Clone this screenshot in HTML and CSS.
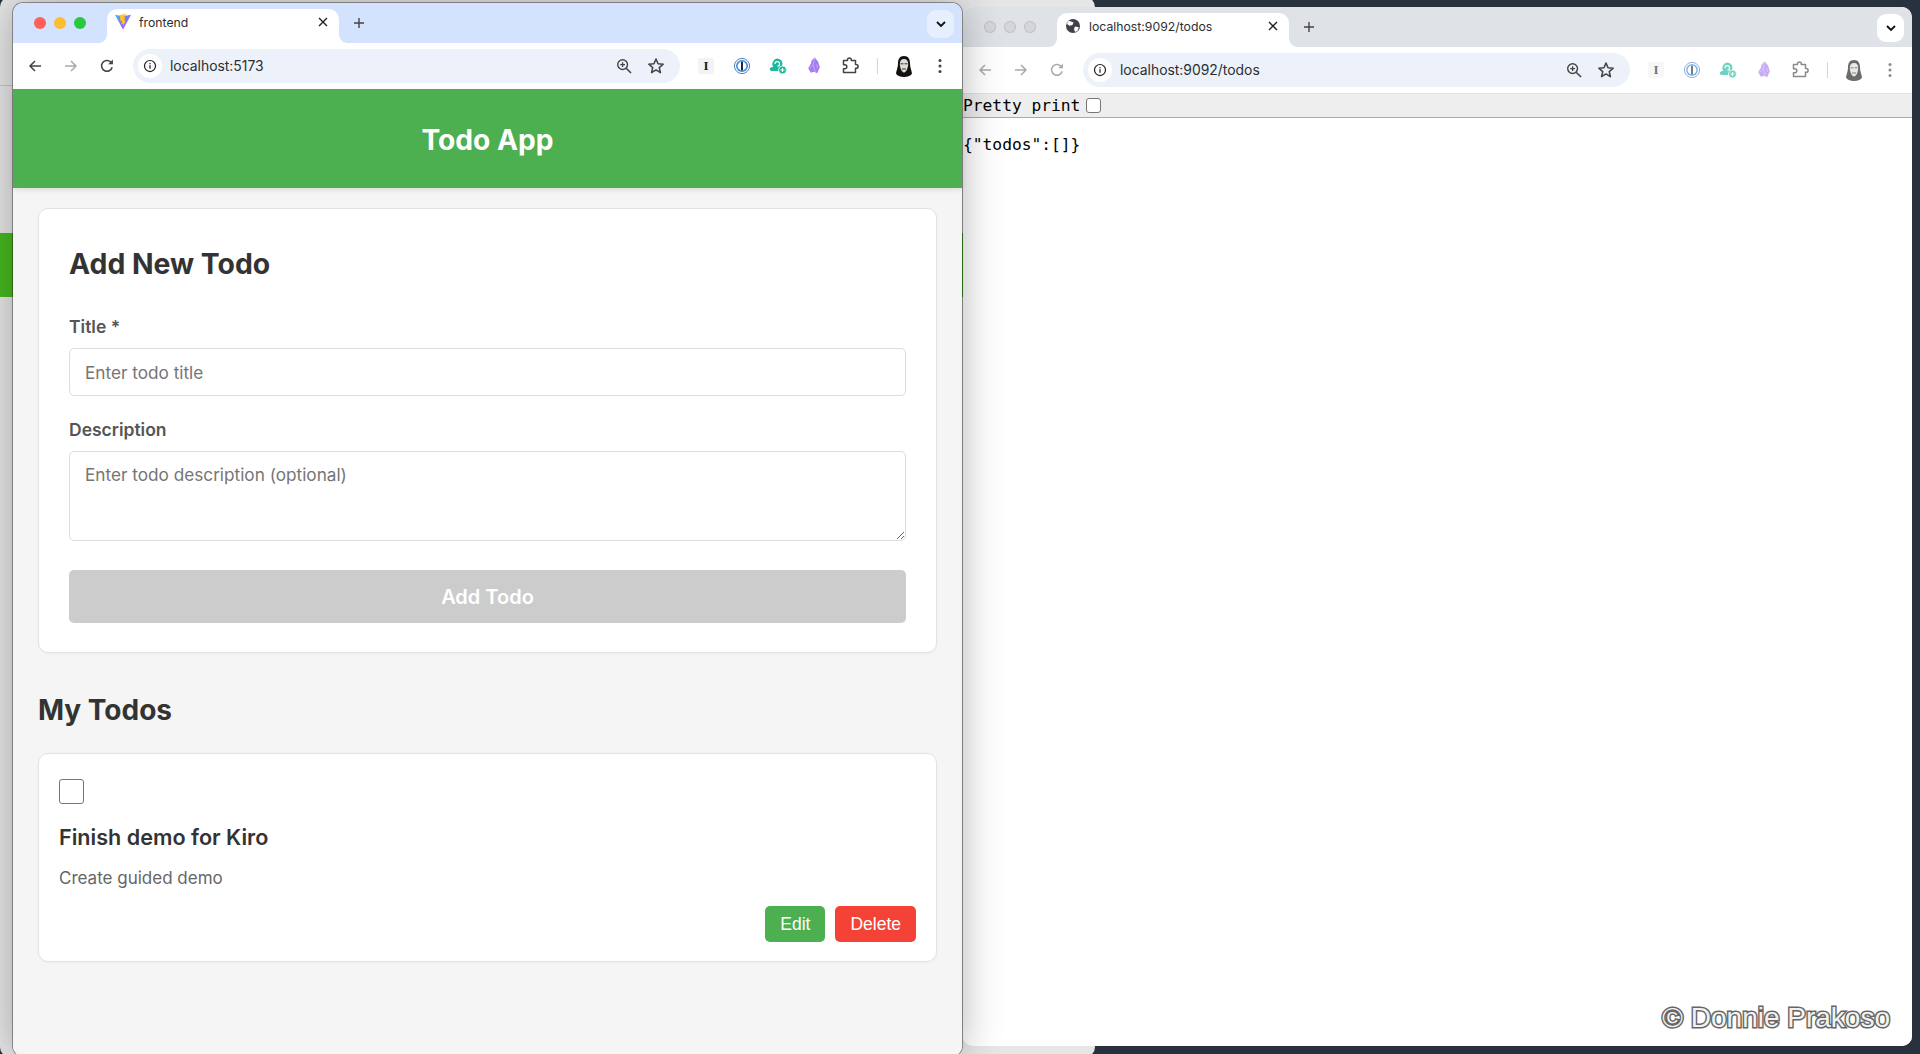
FILE: index.html
```html
<!DOCTYPE html>
<html lang="en">
<head>
<meta charset="utf-8">
<title>frontend</title>
<link rel="stylesheet" href="styles.css">
</head>
<body>
<svg class="defs" width="0" height="0" aria-hidden="true">
  <symbol id="i-back" viewBox="0 0 16 16"><path d="M14 8H3M8 3 3 8l5 5" fill="none" stroke="currentColor" stroke-width="1.5"/></symbol>
  <symbol id="i-fwd" viewBox="0 0 16 16"><path d="M2 8h11M8 3l5 5-5 5" fill="none" stroke="currentColor" stroke-width="1.5"/></symbol>
  <symbol id="i-reload" viewBox="0 0 16 16"><path d="M13.2 9.2A5.4 5.4 0 1 1 11.8 4L13.4 5.6" fill="none" stroke="currentColor" stroke-width="1.5"/><path d="M13.9 1.6v4.7H9.2z" fill="currentColor"/></symbol>
  <symbol id="i-info" viewBox="0 0 16 16"><circle cx="8" cy="8" r="6.3" fill="none" stroke="currentColor" stroke-width="1.4"/><rect x="7.3" y="7" width="1.4" height="4.2" fill="currentColor"/><rect x="7.3" y="4.6" width="1.4" height="1.4" fill="currentColor"/></symbol>
  <symbol id="i-zoom" viewBox="0 0 16 16"><circle cx="6.6" cy="6.6" r="4.9" fill="none" stroke="currentColor" stroke-width="1.4"/><path d="M10.2 10.2 15 15" stroke="currentColor" stroke-width="1.6"/><path d="M4.2 6.6h4.8M6.6 4.2v4.8" stroke="currentColor" stroke-width="1.3"/></symbol>
  <symbol id="i-star" viewBox="0 0 16 16"><path d="M8 1.8 9.8 6l4.6.4-3.5 3 1 4.5L8 11.5 4.100 13.900l1-4.500-3.500-3L6.200 6z" fill="none" stroke="currentColor" stroke-width="1.4" stroke-linejoin="round"/></symbol>
  <symbol id="i-close" viewBox="0 0 10 10"><path d="M1 1l8 8M9 1 1 9" stroke="currentColor" stroke-width="1.4"/></symbol>
  <symbol id="i-plus" viewBox="0 0 12 12"><path d="M6 1v10M1 6h10" stroke="currentColor" stroke-width="1.4"/></symbol>
  <symbol id="i-chev" viewBox="0 0 12 12"><path d="M2 4l4 4 4-4" fill="none" stroke="currentColor" stroke-width="1.8"/></symbol>
  <symbol id="i-menu" viewBox="0 0 4 16"><circle cx="2" cy="2.500" r="1.500" fill="currentColor"/><circle cx="2" cy="8" r="1.500" fill="currentColor"/><circle cx="2" cy="13.500" r="1.500" fill="currentColor"/></symbol>
  <symbol id="i-puzzle" viewBox="0 0 18 18"><path d="M2.500 3.500H6.500V2.800A1.900 1.900 0 0 1 10.300 2.800V3.500H14.500V7.500H15.200A1.900 1.900 0 0 1 15.200 11.300H14.500V15.500H2.500V11.700H3.800A2 2 0 0 0 3.800 7.700H2.500Z" fill="none" stroke="currentColor" stroke-width="1.500" stroke-linejoin="round"/></symbol>
  <symbol id="i-1p" viewBox="0 0 18 18"><circle cx="9" cy="9" r="7.600" fill="#fff" stroke="#5b7fb5" stroke-width="1"/><circle cx="9" cy="9" r="6" fill="#3d8fe0"/><circle cx="9" cy="9" r="4.400" fill="#fff"/><rect x="8" y="4.500" width="2" height="9" rx=".6" fill="#1d2b3f"/></symbol>
  <symbol id="i-teal" viewBox="0 0 18 18"><path d="M8 1.500a5.500 5.500 0 0 1 5.500 5.500l-.5 2.500-2.500 1.500-1.500 3H2.500A1.800 1.800 0 0 1 2 10.500L4.200 9.800A5.500 5.500 0 0 1 8 1.500Z" fill="#19b79b"/><path d="M6 7a2.300 2.300 0 1 1 2.500 2.200" fill="none" stroke="#fff" stroke-width="1.200"/><circle cx="13.500" cy="13" r="4" fill="#19b79b" stroke="#fff" stroke-width=".8"/><path d="M13.500 11v4M11.500 13h4" stroke="#fff" stroke-width="1.200"/></symbol>
  <symbol id="i-crystal" viewBox="0 0 18 20"><path d="M9.800.5 13.500 5 15.500 11.500 12.500 18 9 16.500 5.500 17.500 2.500 12.500 5.500 7.500 6.500 3.500Z" fill="#a67cf0"/><path d="M9.800.5 8 8.500 10.500 16.500M8 8.500 3.500 13M12 8 13 12" fill="none" stroke="#c9b0f8" stroke-width=".9"/></symbol>
  <symbol id="i-avatar" viewBox="0 0 18 22"><path d="M9 .5C4.500.5 3 4 3 8c0 4-1.500 6.500-2 10 1 2 4 3.500 8 3.500s7-1.500 8-3.500c-.5-3.500-2-6-2-10C15 4 13.500.5 9 .5Z" fill="#111"/><path d="M9 3.500C6 3.500 4.800 5.500 4.800 8.500S6.500 17 9 17s4.200-5.500 4.200-8.500S12 3.500 9 3.500Z" fill="#e2dcd6"/><path d="M5.500 8.300h3M9.500 8.300h3M7 13.500h4" stroke="#222" stroke-width=".9"/></symbol>
  <symbol id="i-globe" viewBox="0 0 16 16"><circle cx="8" cy="8" r="7" fill="#3f4347"/><path d="M4 2.800 8.500 4.500 7.500 7 4.500 7.800 2 6 2.500 4ZM10 8.500l3.800.8-1.300 3.500-2.500 1.200-1-3Z" fill="#fff"/></symbol>
  <linearGradient id="vite-a" x1="0" y1="0" x2="1" y2="1"><stop offset="0" stop-color="#41b4ff"/><stop offset="1" stop-color="#bd34fe"/></linearGradient>
  <symbol id="i-vite" viewBox="0 0 16 16"><path d="M0 .8 8 15.500 16 .8 8 2.200Z" fill="url(#vite-a)"/><path d="M11.500 0 4.800 1 5.500 7 7 6.700 6.500 10 8 9.700 7.800 12.500 11 6.500 9.300 6.800 10.200 3.500 8.800 3.800Z" fill="#ffc41f"/></symbol>
</svg>

<div class="back-window">
  <div class="back-line"></div>
  <div class="back-green"></div>
</div>

<section class="window window-right">
  <header class="tabstrip tabstrip-idle">
    <div class="lights lights-idle"><span class="light"></span><span class="light"></span><span class="light"></span></div>
    <div class="tab">
      <svg class="tab-fav"><use href="#i-globe"/></svg>
      <span class="tab-title">localhost:9092/todos</span>
      <svg class="tab-close"><use href="#i-close"/></svg>
    </div>
    <svg class="newtab"><use href="#i-plus"/></svg>
    <div class="tabmenu tabmenu-idle"><svg class="tabmenu-icon"><use href="#i-chev"/></svg></div>
  </header>
  <nav class="toolbar">
    <span class="tool faded"><svg class="ico16"><use href="#i-back"/></svg></span>
    <span class="tool faded"><svg class="ico16"><use href="#i-fwd"/></svg></span>
    <span class="tool faded"><svg class="ico16"><use href="#i-reload"/></svg></span>
    <div class="omnibox">
      <span class="site-info"><svg class="ico14"><use href="#i-info"/></svg></span>
      <span class="url">localhost:9092/todos</span>
      <span class="omni-tool omni-first"><svg class="ico16"><use href="#i-zoom"/></svg></span>
      <span class="omni-tool"><svg class="ico18"><use href="#i-star"/></svg></span>
    </div>
    <div class="extensions ext-faded">
      <span class="tool"><span class="ext-i">I</span></span>
      <span class="tool"><svg class="ico18"><use href="#i-1p"/></svg></span>
      <span class="tool"><svg class="ico18"><use href="#i-teal"/></svg></span>
      <span class="tool"><svg class="ico18"><use href="#i-crystal"/></svg></span>
      <span class="tool"><svg class="ico18"><use href="#i-puzzle"/></svg></span>
    </div>
    <span class="divider"></span>
    <span class="tool ext-faded"><svg class="avatar"><use href="#i-avatar"/></svg></span>
    <span class="tool ext-faded"><svg class="ico-menu"><use href="#i-menu"/></svg></span>
  </nav>
  <div class="json-page">
    <div class="pretty-bar"><label class="pretty-label">Pretty print</label><input class="pretty-check" type="checkbox"></div>
    <pre class="json">{"todos":[]}</pre>
    <div class="watermark">© Donnie Prakoso</div>
  </div>
</section>

<section class="window window-left">
  <header class="tabstrip">
    <div class="lights"><span class="light red"></span><span class="light yellow"></span><span class="light green"></span></div>
    <div class="tab">
      <svg class="tab-fav"><use href="#i-vite"/></svg>
      <span class="tab-title">frontend</span>
      <svg class="tab-close"><use href="#i-close"/></svg>
    </div>
    <svg class="newtab"><use href="#i-plus"/></svg>
    <div class="tabmenu"><svg class="tabmenu-icon"><use href="#i-chev"/></svg></div>
  </header>
  <nav class="toolbar">
    <span class="tool"><svg class="ico16"><use href="#i-back"/></svg></span>
    <span class="tool faded"><svg class="ico16"><use href="#i-fwd"/></svg></span>
    <span class="tool"><svg class="ico16"><use href="#i-reload"/></svg></span>
    <div class="omnibox">
      <span class="site-info"><svg class="ico14"><use href="#i-info"/></svg></span>
      <span class="url">localhost:5173</span>
      <span class="omni-tool omni-first"><svg class="ico16"><use href="#i-zoom"/></svg></span>
      <span class="omni-tool"><svg class="ico18"><use href="#i-star"/></svg></span>
    </div>
    <div class="extensions">
      <span class="tool"><span class="ext-i">I</span></span>
      <span class="tool"><svg class="ico18"><use href="#i-1p"/></svg></span>
      <span class="tool"><svg class="ico18"><use href="#i-teal"/></svg></span>
      <span class="tool"><svg class="ico18"><use href="#i-crystal"/></svg></span>
      <span class="tool"><svg class="ico18"><use href="#i-puzzle"/></svg></span>
    </div>
    <span class="divider"></span>
    <span class="tool"><svg class="avatar"><use href="#i-avatar"/></svg></span>
    <span class="tool"><svg class="ico-menu"><use href="#i-menu"/></svg></span>
  </nav>
  <div class="app">
    <div class="app-header"><h1 class="app-title">Todo App</h1></div>
    <main class="app-main">
      <form class="card form-card">
        <h2 class="form-title">Add New Todo</h2>
        <label class="field-label">Title *</label>
        <input class="field field-input" type="text" placeholder="Enter todo title">
        <label class="field-label field-label-second">Description</label>
        <textarea class="field field-area" placeholder="Enter todo description (optional)"></textarea>
        <button class="submit" type="button">Add Todo</button>
      </form>
      <h2 class="list-title">My Todos</h2>
      <article class="card todo-card">
        <input class="todo-check" type="checkbox">
        <h3 class="todo-title">Finish demo for Kiro</h3>
        <p class="todo-desc">Create guided demo</p>
        <div class="todo-actions">
          <button class="action action-edit" type="button">Edit</button>
          <button class="action action-delete" type="button">Delete</button>
        </div>
      </article>
    </main>
  </div>
</section>
</body>
</html>
```
FILE: styles.css
```css
* { box-sizing: border-box; }
html, body { margin: 0; height: 100%; }
body {
  position: relative;
  width: 1920px;
  height: 1054px;
  overflow: hidden;
  background: #27323e;
  font-family: Inter, "Liberation Sans", sans-serif;
  color: #333;
}
.defs { position: absolute; }

.back-window {
  position: absolute;
  left: 0;
  top: -3px;
  width: 1095px;
  height: 1060px;
  border-radius: 10px;
  background: #e6e6e6;
}
.back-line { position: absolute; left: 0; top: 88px; width: 100%; height: 1px; background: #c4c4c4; }
.back-green { position: absolute; left: 0; top: 236px; width: 100%; height: 64px; background: #47b81f; }

.window {
  position: absolute;
  display: flex;
  flex-direction: column;
  overflow: hidden;
  border-radius: 10px;
  background: #fff;
}
.window-left {
  left: 13px;
  top: 3px;
  width: 949px;
  height: 1053px;
  box-shadow: 0 0 40px rgba(0, 0, 0, .3), 0 0 0 1px rgba(0, 0, 0, .35);
  overflow: visible;
}
.window-right { left: 963px; top: 7px; width: 949px; height: 1039px; }

.tabstrip {
  flex: none;
  display: flex;
  height: 40px;
  background: #d3e3fd;
  border-radius: 10px 10px 0 0;
}
.tabstrip-idle { background: #dfe3e8; }
.lights { flex: none; display: flex; gap: 8px; width: 94px; padding: 14px 0 0 21px; }
.light { width: 12px; height: 12px; border-radius: 50%; }
.lights-idle .light { background: #d4d6d9; box-shadow: inset 0 0 0 1px #bfc2c5; }
.red { background: #ff5f57; }
.yellow { background: #febc2e; }
.green { background: #28c840; }

.tab {
  position: relative;
  flex: none;
  display: flex;
  align-items: center;
  width: 232px;
  height: 34px;
  margin-top: 6px;
  padding: 0 11px 8px 8px;
  background: #fff;
  border-radius: 10px 10px 0 0;
}
.tab::before, .tab::after {
  content: "";
  position: absolute;
  bottom: 0;
  width: 8px;
  height: 8px;
}
.tab::before { left: -8px; background: radial-gradient(circle at 0 0, transparent 7.5px, #fff 8px); }
.tab::after { right: -8px; background: radial-gradient(circle at 100% 0, transparent 7.5px, #fff 8px); }
.tab-fav { width: 16px; height: 16px; flex: none; }
.tab-title { margin-left: 8px; font-size: 12.250px; color: #2b2f33; white-space: nowrap; }
.tab-close { width: 10px; height: 10px; margin-left: auto; color: #222; }
.newtab { flex: none; width: 12px; height: 12px; margin: 14px 0 0 14px; color: #444; }
.tabmenu {
  flex: none;
  display: flex;
  align-items: center;
  justify-content: center;
  width: 27px;
  height: 28px;
  margin: 7px 8px 0 auto;
  border-radius: 9px;
  background: #e6effe;
}
.tabmenu-idle { background: #fff; }
.tabmenu-icon { width: 12px; height: 12px; color: #111; }

.toolbar {
  flex: none;
  display: flex;
  align-items: center;
  height: 46px;
  padding-left: 4px;
  background: #fff;
  border-radius: 0 10px 0 0;
  color: #444;
}
.tool { flex: none; display: flex; align-items: center; justify-content: center; width: 36px; height: 36px; }
.faded { color: #aaa; }
.ext-faded { opacity: .62; }
.ico14 { width: 14px; height: 14px; }
.ico16 { width: 16px; height: 16px; }
.ico18 { width: 18px; height: 18px; }
.avatar { width: 18px; height: 23px; }
.ico-menu { width: 4px; height: 16px; }
.omnibox {
  flex: none;
  display: flex;
  align-items: center;
  width: 547px;
  height: 34px;
  margin: 0 8px;
  padding-right: 8px;
  border-radius: 17px;
  background: #edf2fa;
}
.site-info {
  flex: none;
  display: flex;
  align-items: center;
  justify-content: center;
  width: 24px;
  height: 24px;
  margin-left: 5px;
  border-radius: 50%;
  background: #fff;
  color: #222;
}
.url { margin-left: 8px; font-size: 13.900px; color: #2b2f33; }
.omni-tool { flex: none; display: flex; align-items: center; justify-content: center; width: 32px; height: 32px; }
.omni-first { margin-left: auto; }
.extensions { display: flex; flex: none; }
.ext-i {
  display: block;
  width: 16px;
  height: 16px;
  border-radius: 3px;
  background: #f3f3f3;
  font: bold 13px/16px "Liberation Serif", serif;
  text-align: center;
  color: #222;
}
.divider { flex: none; width: 1px; height: 16px; margin: 0 8px 0 9px; background: #c7d7f2; }

.json-page { position: relative; flex: 1; background: #fff; border-top: 1px solid #e2e2e2; }
.pretty-bar {
  display: flex;
  align-items: center;
  height: 24px;
  background: #eee;
  border-bottom: 1.500px solid #aaa;
  font: 16.250px "DejaVu Sans Mono", monospace;
  color: #000;
}
.pretty-check {
  appearance: none;
  width: 15px;
  height: 15px;
  margin: 0 0 0 6px;
  background: #fff;
  border: 1px solid #767676;
  border-radius: 3px;
}
.json { margin: 17px 0 0; font: 16.250px/20px "DejaVu Sans Mono", monospace; color: #000; }
.watermark {
  position: absolute;
  right: 22px;
  bottom: 12px;
  font: 28px "Liberation Sans", sans-serif;
  color: #f2f2f2;
  -webkit-text-stroke: 3px #666;
  paint-order: stroke fill;
}

.app {
  flex: 1;
  background: #f5f5f5;
  border-radius: 0 0 10px 10px;
}
.app-header {
  display: flex;
  align-items: center;
  justify-content: center;
  height: 99px;
  padding-top: 2px;
  background: #4caf50;
  box-shadow: 0 2px 5px rgba(0, 0, 0, .1);
}
.app-title { margin: 0; font-size: 28.200px; font-weight: 700; color: #fff; }
.app-main { padding: 20px 25px; }
.card {
  display: flex;
  flex-direction: column;
  background: #fff;
  border: 1px solid #e2e2e2;
  border-radius: 10px;
  box-shadow: 0 1px 3px rgba(0, 0, 0, .03);
}
.form-card { height: 445px; padding: 37px 30px 0; }
.form-title { margin: 0; font-size: 28.350px; line-height: 36px; font-weight: 700; color: #333; }
.field-label { margin-top: 34px; font-size: 17.500px; line-height: 22px; font-weight: 600; color: #555; }
.field-label-second { margin-top: 23px; }
.field {
  margin-top: 10px;
  padding: 0 15px;
  width: 100%;
  font-family: inherit;
  font-size: 17.200px;
  color: #333;
  background: #fff;
  border: 1px solid #ddd;
  border-radius: 5px;
}
.field::placeholder { color: #757575; }
.field-input { height: 48px; }
.field-area { height: 90px; margin-top: 10px; padding-top: 12px; resize: vertical; }
.submit {
  height: 53px;
  margin-top: 29px;
  border: 0;
  border-radius: 5px;
  background: #ccc;
  font-family: inherit;
  font-size: 20px;
  font-weight: 600;
  color: #fff;
}
.list-title { margin: 38px 0 24px; font-size: 28px; line-height: 38px; font-weight: 700; color: #333; }
.todo-card { height: 209px; padding: 25px 20px 0; }
.todo-check {
  appearance: none;
  width: 25px;
  height: 25px;
  margin: 0;
  background: #fff;
  border: 1.250px solid #767676;
  border-radius: 3px;
}
.todo-title { margin: 19px 0 0; font-size: 21.600px; line-height: 28px; font-weight: 600; color: #333; }
.todo-desc { margin: 15px 0 0; font-size: 17px; line-height: 24px; color: #666; }
.todo-actions { display: flex; justify-content: flex-end; gap: 10px; margin-top: 16px; }
.action {
  height: 36px;
  padding: 0 15px;
  border: 0;
  border-radius: 5px;
  font: 17.500px "Liberation Sans", sans-serif;
  color: #fff;
}
.action-edit { background: #4caf50; }
.action-delete { background: #f44336; }
```
